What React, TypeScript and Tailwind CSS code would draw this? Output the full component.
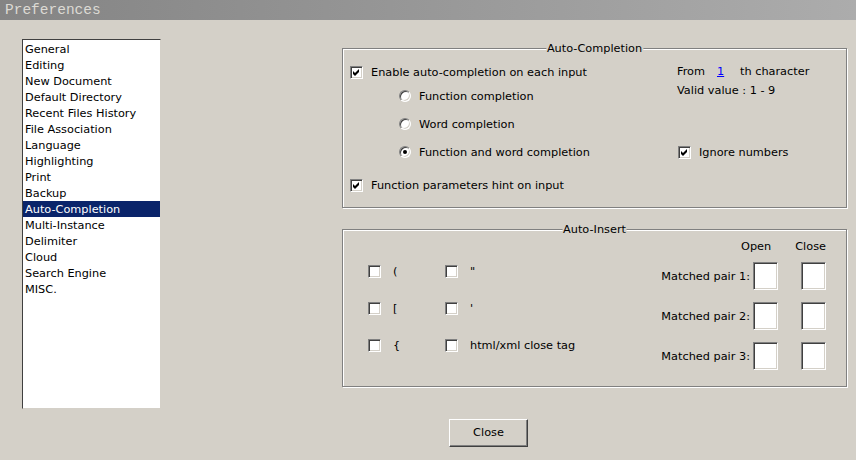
import React from 'react';

const sunken =
  'border border-t-[#808080] border-l-[#808080] border-r-white border-b-white shadow-[inset_1px_1px_0_#404040,inset_-1px_-1px_0_#d4d0c8]';

function Check({ checked }: { checked?: boolean }) {
  return (
    <span className={`flex w-[13px] h-[13px] shrink-0 items-center justify-center bg-white ${sunken}`}>
      {checked && (
        <svg width="7" height="7" viewBox="0 0 7 7">
          <polygon points="0,2 2,4 6,0 6,3 2,7 0,5" fill="#000" />
        </svg>
      )}
    </span>
  );
}

function Radio({ checked }: { checked?: boolean }) {
  return (
    <span className="flex w-[12px] h-[12px] shrink-0 items-center justify-center rounded-full bg-white border border-t-[#808080] border-l-[#808080] border-r-white border-b-white shadow-[inset_1px_1px_0_#404040,inset_-1px_-1px_0_#d4d0c8]">
      {checked && <span className="w-[4px] h-[4px] rounded-full bg-black" />}
    </span>
  );
}

function Group({ title, height, children }: { title: string; height: string; children: React.ReactNode }) {
  return (
    <div className={`relative w-[505px] ${height} border border-[#808080] shadow-[inset_1px_1px_0_#fff,1px_1px_0_#fff]`}>
      <span className="absolute left-1/2 -translate-x-1/2 -top-[7px] px-[1px] bg-[#d4d0c8] leading-[14px]">{title}</span>
      {children}
    </div>
  );
}

const pages = [
  'General',
  'Editing',
  'New Document',
  'Default Directory',
  'Recent Files History',
  'File Association',
  'Language',
  'Highlighting',
  'Print',
  'Backup',
  'Auto-Completion',
  'Multi-Instance',
  'Delimiter',
  'Cloud',
  'Search Engine',
  'MISC.',
];

const brackets = [
  ['(', '"'],
  ['[', "'"],
  ['{', 'html/xml close tag'],
];

export default function App() {
  return (
    <div className="w-[856px] h-[460px] overflow-hidden bg-[#d4d0c8] text-black text-[11.3px] font-['DejaVu_Sans',sans-serif]">
      {/* Title bar */}
      <div className="h-[20px] flex items-center pl-[5px] bg-gradient-to-r from-[#848484] to-[#acacac]">
        <span className="font-['Liberation_Mono',monospace] text-[14.5px] leading-none text-[#dcdad4]">Preferences</span>
      </div>

      <div className="flex">
        {/* Page list */}
        <div className="ml-[22px] mt-[19px] w-[139px] h-[370px] bg-white border border-t-[#404040] border-l-[#404040] border-r-[#d4d0c8] border-b-[#d4d0c8] pt-[1px]">
          {pages.map((p) => (
            <div
              key={p}
              className={`h-[16px] leading-[18px] pl-[2px] ${p === 'Auto-Completion' ? 'bg-[#0a246a] text-white' : ''}`}
            >
              {p}
            </div>
          ))}
        </div>

        <div className="ml-[181px] mt-[28px] flex flex-col">
          {/* Auto-Completion */}
          <Group title="Auto-Completion" height="h-[160px]">
            <div className="flex">
              <div className="w-[334px] pl-[7px] pt-[15px] flex flex-col">
                <div className="h-[16px] flex items-center gap-[8px]">
                  <Check checked />
                  <span className="pt-[2px]">Enable auto-completion on each input</span>
                </div>
                <div className="h-[16px] mt-[8px] ml-[49px] flex items-center gap-[8px]">
                  <Radio />
                  <span className="pt-[2px]">Function completion</span>
                </div>
                <div className="h-[16px] mt-[12px] ml-[49px] flex items-center gap-[8px]">
                  <Radio />
                  <span className="pt-[2px]">Word completion</span>
                </div>
                <div className="h-[16px] mt-[12px] ml-[49px] flex items-center gap-[8px]">
                  <Radio checked />
                  <span className="pt-[2px]">Function and word completion</span>
                </div>
                <div className="h-[16px] mt-[17px] flex items-center gap-[8px]">
                  <Check checked />
                  <span className="pt-[2px]">Function parameters hint on input</span>
                </div>
              </div>
              <div className="pt-[15px] flex flex-col">
                <div className="h-[16px] flex items-center">
                  <span className="w-[40px]">From</span>
                  <span className="w-[23px] text-[#0000ff] underline">1</span>
                  <span>th character</span>
                </div>
                <div className="h-[16px] mt-[3px] flex items-center">Valid value : 1 - 9</div>
                <div className="h-[16px] mt-[45px] pl-[1px] flex items-center gap-[8px]">
                  <Check checked />
                  <span className="pt-[2px]">Ignore numbers</span>
                </div>
              </div>
            </div>
          </Group>

          {/* Auto-Insert */}
          <div className="mt-[21px]">
            <Group title="Auto-Insert" height="h-[158px]">
              <div className="flex">
                <div className="pl-[25px] pt-[33px] flex flex-col gap-[21px]">
                  {brackets.map(([a, b]) => (
                    <div key={a} className="h-[16px] flex items-center">
                      <div className="w-[77px] flex items-center gap-[12px]">
                        <Check />
                        <span className="pt-[2px]">{a}</span>
                      </div>
                      <div className="flex items-center gap-[12px]">
                        <Check />
                        <span className="pt-[2px]">{b}</span>
                      </div>
                    </div>
                  ))}
                </div>
                <div className="ml-auto pr-[20px] pt-[9px] flex flex-col items-end">
                  <div className="h-[14px] leading-[16px] flex">
                    <span>Open</span>
                    <span className="ml-[24px]">Close</span>
                  </div>
                  {[1, 2, 3].map((n) => (
                    <div key={n} className={`h-[28px] flex items-center ${n === 1 ? 'mt-[9px]' : 'mt-[12px]'}`}>
                      <span className="mr-[3px] pt-[2px]">Matched pair {n}:</span>
                      <span className={`w-[25px] h-[28px] bg-white ${sunken}`} />
                      <span className={`ml-[23px] w-[25px] h-[28px] bg-white ${sunken}`} />
                    </div>
                  ))}
                </div>
              </div>
            </Group>
          </div>

          <button className="mt-[32px] ml-[107px] w-[79px] h-[28px] bg-[#d4d0c8] border border-t-white border-l-white border-r-[#404040] border-b-[#404040] shadow-[inset_-1px_-1px_0_#808080] text-[11.3px] pt-[1px]">
            Close
          </button>
        </div>
      </div>
    </div>
  );
}
